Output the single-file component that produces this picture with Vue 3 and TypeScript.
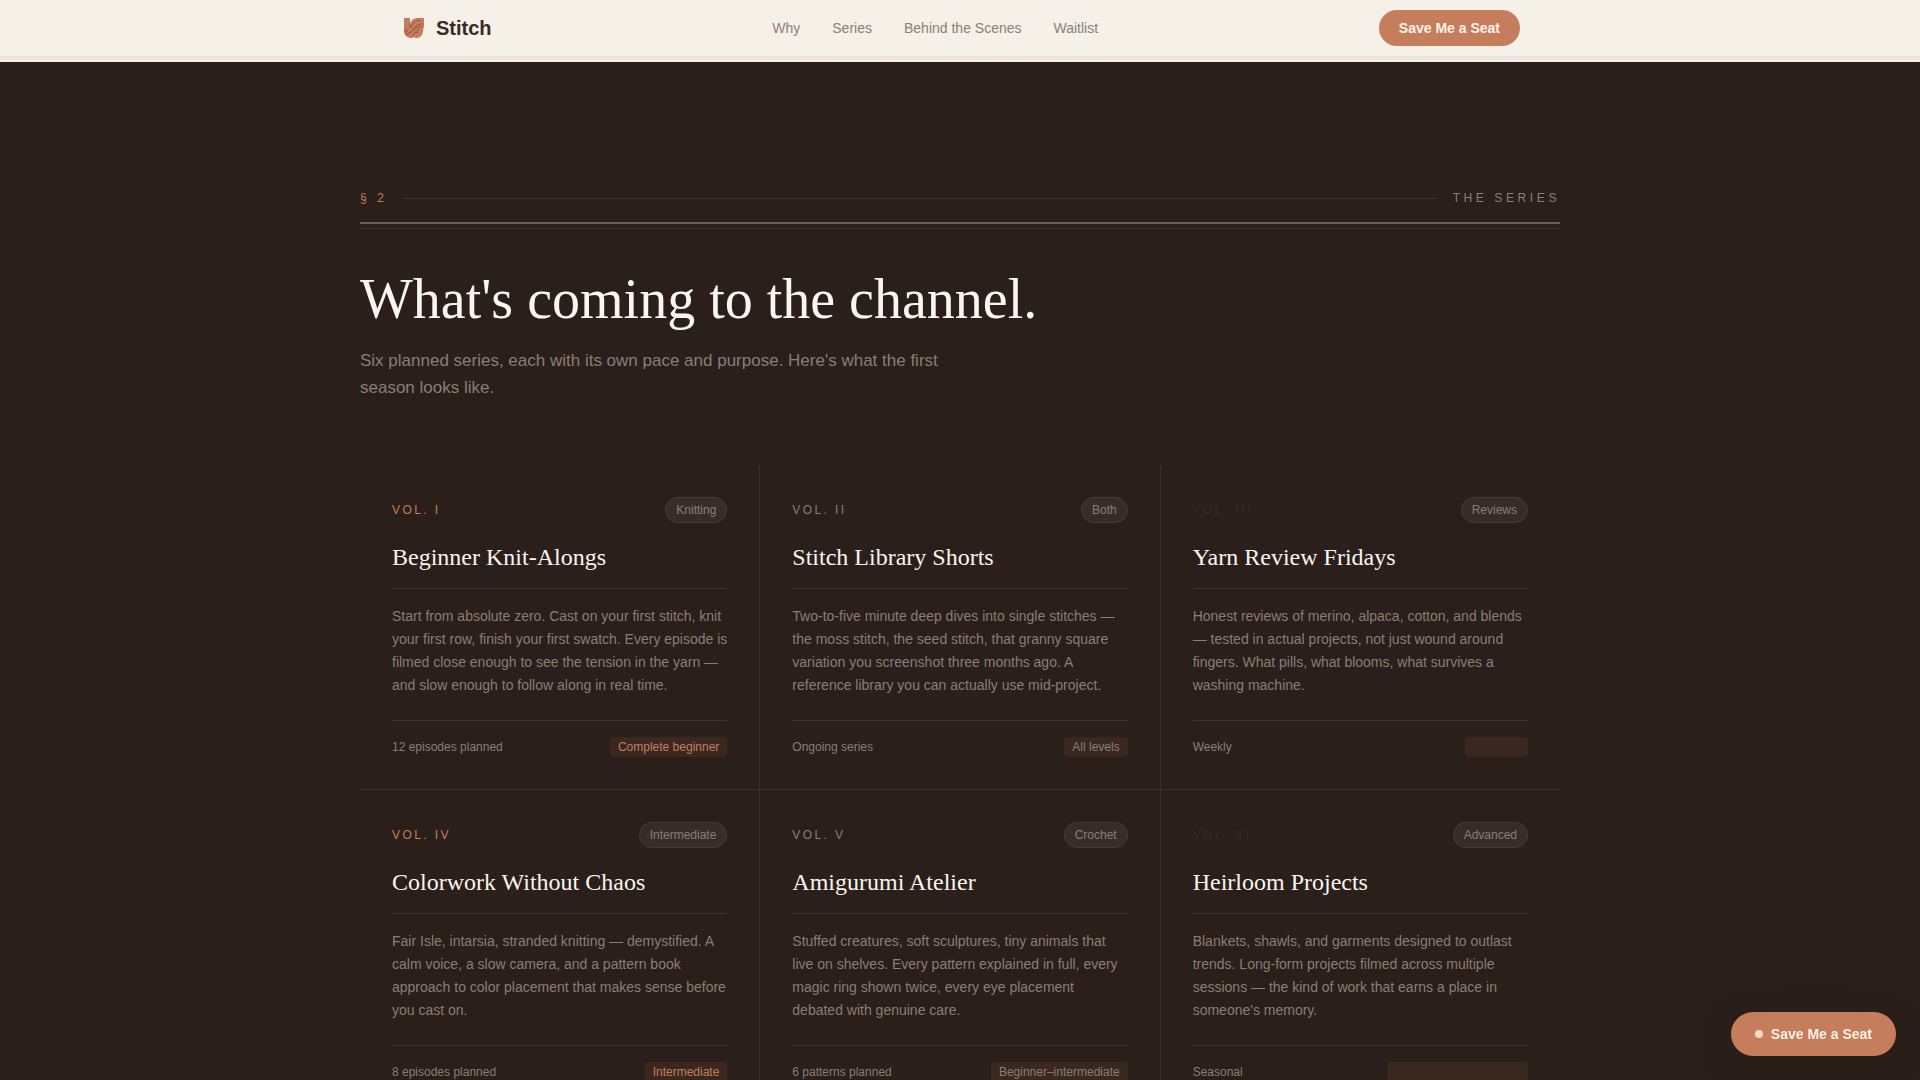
<script setup lang="ts">
interface Series {
  volume: string
  tone: 'warm' | 'muted' | 'dark'
  tag: string
  title: string
  description: string
  schedule: string
  level: string
}

const links = [
  { label: 'Why', href: '#why' },
  { label: 'Series', href: '#series' },
  { label: 'Behind the Scenes', href: '#behind' },
  { label: 'Waitlist', href: '#waitlist' },
]

const series: Series[] = [
  {
    volume: 'Vol. I',
    tone: 'warm',
    tag: 'Knitting',
    title: 'Beginner Knit-Alongs',
    description:
      'Start from absolute zero. Cast on your first stitch, knit your first row, finish your first swatch. Every episode is filmed close enough to see the tension in the yarn — and slow enough to follow along in real time.',
    schedule: '12 episodes planned',
    level: 'Complete beginner',
  },
  {
    volume: 'Vol. II',
    tone: 'muted',
    tag: 'Both',
    title: 'Stitch Library Shorts',
    description:
      'Two-to-five minute deep dives into single stitches — the moss stitch, the seed stitch, that granny square variation you screenshot three months ago. A reference library you can actually use mid-project.',
    schedule: 'Ongoing series',
    level: 'All levels',
  },
  {
    volume: 'Vol. III',
    tone: 'dark',
    tag: 'Reviews',
    title: 'Yarn Review Fridays',
    description:
      'Honest reviews of merino, alpaca, cotton, and blends — tested in actual projects, not just wound around fingers. What pills, what blooms, what survives a washing machine.',
    schedule: 'Weekly',
    level: 'All levels',
  },
  {
    volume: 'Vol. IV',
    tone: 'warm',
    tag: 'Intermediate',
    title: 'Colorwork Without Chaos',
    description:
      'Fair Isle, intarsia, stranded knitting — demystified. A calm voice, a slow camera, and a pattern book approach to color placement that makes sense before you cast on.',
    schedule: '8 episodes planned',
    level: 'Intermediate',
  },
  {
    volume: 'Vol. V',
    tone: 'muted',
    tag: 'Crochet',
    title: 'Amigurumi Atelier',
    description:
      'Stuffed creatures, soft sculptures, tiny animals that live on shelves. Every pattern explained in full, every magic ring shown twice, every eye placement debated with genuine care.',
    schedule: '6 patterns planned',
    level: 'Beginner–intermediate',
  },
  {
    volume: 'Vol. VI',
    tone: 'dark',
    tag: 'Advanced',
    title: 'Heirloom Projects',
    description:
      "Blankets, shawls, and garments designed to outlast trends. Long-form projects filmed across multiple sessions — the kind of work that earns a place in someone's memory.",
    schedule: 'Seasonal',
    level: 'Intermediate–advanced',
  },
]
</script>

<template>
  <div class="page">
    <header class="site-header">
      <div class="bar">
        <a class="brand" href="#top">
          <svg class="mark" viewBox="0 0 28 28" aria-hidden="true">
            <path
              class="yarn"
              d="M4 4h6v6c1-4 4-6 8-6h6v8c0 2-1 3-1 5 0 4-3 7-6 7-1 0-2 0-3-1-1 1-2 1-3 1-4 0-7-3-7-7z"
            />
            <path
              class="ply"
              d="M10 10v4l3-4c2-3 5-4 8-3M6 14c1 5 3 6 6 3l4-5c2-2 4-2 7-2M9 20l5-5c3-3 6-1 4 1s-4 3-6 6M18 12l4 1M15 19l3-1M5 16c0 3 2 5 4 6"
            />
          </svg>
          <span>Stitch</span>
        </a>
        <nav class="links" aria-label="Main">
          <a v-for="link in links" :key="link.href" :href="link.href">{{ link.label }}</a>
        </nav>
        <button class="cta" type="button">Save Me a Seat</button>
      </div>
    </header>
    <div class="seam"></div>

    <main id="series" class="section">
      <div class="eyebrow">
        <span class="number">§ 2</span>
        <span class="thread"></span>
        <span class="label">The Series</span>
      </div>
      <div class="double-rule"></div>
      <h1>What's coming to the channel.</h1>
      <p class="intro">
        Six planned series, each with its own pace and purpose. Here's what the first season looks like.
      </p>

      <div class="grid">
        <article v-for="item in series" :key="item.volume" class="card">
          <div class="card-top">
            <span class="volume" :class="item.tone">{{ item.volume }}</span>
            <span class="tag">{{ item.tag }}</span>
          </div>
          <h2>{{ item.title }}</h2>
          <p class="description">{{ item.description }}</p>
          <div class="card-foot">
            <span>{{ item.schedule }}</span>
            <span class="level" :class="item.tone">{{ item.level }}</span>
          </div>
        </article>
      </div>
    </main>

    <button class="floating" type="button"><span class="dot"></span>Save Me a Seat</button>
  </div>
</template>

<style>
body {
  margin: 0;
  background: #2a1f1a;
}
</style>

<style scoped>
.page {
  height: 100vh;
  overflow: hidden;
  background: #2a1f1a;
  color: #8a7e76;
  font-family: "Liberation Sans", Arial, sans-serif;
}

.site-header {
  background: #f5f0e8;
}

.bar {
  box-sizing: border-box;
  max-width: 1200px;
  height: 56px;
  margin: 0 auto;
  padding: 0 40px;
  display: flex;
  align-items: center;
  justify-content: space-between;
}

.brand {
  display: flex;
  align-items: center;
  gap: 8px;
  color: #3a2a24;
  font-size: 20px;
  font-weight: 700;
  text-decoration: none;
}

.mark {
  width: 28px;
  height: 28px;
}

.yarn {
  fill: #c67d5b;
}

.ply {
  fill: none;
  stroke: #99593c;
  stroke-width: 1;
}

.links {
  display: flex;
  gap: 32px;
}

.links a {
  color: #8a8078;
  font-size: 14px;
  text-decoration: none;
}

button {
  border: 0;
  border-radius: 999px;
  background: #c67d5b;
  color: #faf3ea;
  font-family: inherit;
  font-size: 14px;
  font-weight: 700;
  cursor: pointer;
}

.cta {
  height: 36px;
  padding: 0 20px;
}

.seam {
  height: 4px;
  border-bottom: 2px solid #f5f0e8;
  background: #ede4de;
}

.section {
  max-width: 1200px;
  margin: 0 auto;
  padding: 128px 40px;
}

.eyebrow {
  display: flex;
  align-items: center;
  gap: 16px;
  font-size: 12px;
  line-height: 16px;
  letter-spacing: 0.3em;
  text-transform: uppercase;
}

.number {
  color: #c67d5b;
}

.thread {
  flex: 1;
  height: 1px;
  background: #40342f;
}

.double-rule {
  height: 4px;
  margin-top: 16px;
  border-top: 2px solid #6c5f59;
  border-bottom: 1px solid #40342f;
}

h1 {
  margin: 40px 0 18px;
  color: #faf5ee;
  font-family: "Liberation Serif", "Times New Roman", serif;
  font-size: 56px;
  font-weight: 400;
  line-height: 60px;
}

.intro {
  max-width: 580px;
  margin: 0 0 64px;
  font-size: 17px;
  line-height: 27px;
}

.grid {
  display: grid;
  grid-template-columns: repeat(3, 1fr);
  gap: 1px;
  background: #3d312c;
}

.card {
  padding: 32px;
  background: #2a1f1a;
}

.card-top,
.card-foot {
  display: flex;
  align-items: center;
  justify-content: space-between;
  font-size: 12px;
}

.volume {
  letter-spacing: 0.2em;
  text-transform: uppercase;
}

.warm {
  color: #c67d5b;
}

.muted {
  color: #8a7e76;
}

.volume.dark {
  color: #3a2a24;
}

.tag {
  padding: 0 10px;
  border: 1px solid #483b36;
  border-radius: 13px;
  background: #382c28;
  line-height: 24px;
}

h2 {
  margin: 20px 0 16px;
  padding-bottom: 16px;
  border-bottom: 1px solid #40342f;
  color: #faf5ee;
  font-family: "Liberation Serif", "Times New Roman", serif;
  font-size: 24px;
  font-weight: 400;
  line-height: 29px;
}

.description {
  margin: 0 0 23px;
  font-size: 14px;
  line-height: 23px;
}

.card-foot {
  padding-top: 16px;
  border-top: 1px solid #40342f;
}

.level {
  padding: 0 8px;
  border-radius: 4px;
  background: #3a2820;
  line-height: 20px;
}

.level.dark {
  color: #3a2820;
}

.floating {
  position: fixed;
  right: 24px;
  bottom: 24px;
  height: 44px;
  padding: 0 24px;
  display: flex;
  align-items: center;
  gap: 8px;
  box-shadow: 0 8px 32px rgba(42, 31, 20, 0.4);
}

.dot {
  width: 8px;
  height: 8px;
  border-radius: 50%;
  background: #f0d9cb;
}
</style>
